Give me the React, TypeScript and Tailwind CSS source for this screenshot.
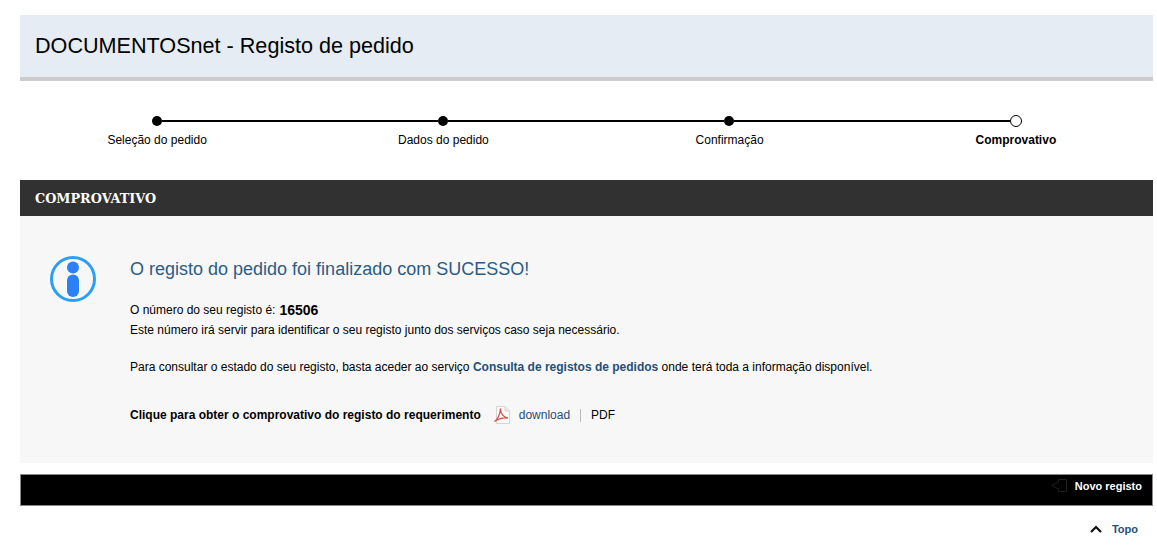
const STEPS = [
  { label: "Seleção do pedido", done: true },
  { label: "Dados do pedido", done: true },
  { label: "Confirmação", done: true },
  { label: "Comprovativo", done: false },
];

function InfoIcon() {
  return (
    <svg width="48" height="48" viewBox="0 0 48 48" className="shrink-0">
      <circle cx="24" cy="24" r="21.500" fill="none" stroke="#2a9ff4" strokeWidth="3" />
      <circle cx="24" cy="12.500" r="6" fill="#2a80f4" />
      <rect x="18" y="19.500" width="12" height="22.500" rx="6" fill="#2a80f4" />
    </svg>
  );
}

function PdfIcon() {
  return (
    <svg width="16" height="18" viewBox="0 0 16 18" className="shrink-0">
      <path d="M2.500 .5H11L15.500 5V17.500H2.500Z" fill="#fbfbfb" stroke="#d4d4d4" />
      <path d="M11 .5V5H15.500" fill="#e8e8e8" stroke="#d4d4d4" />
      <path
        d="M.5 15.500C3 14.500 6 9 6.500 2.500C6.500 7.500 9.500 11.500 14 12C10 11.500 4.500 12.500 .5 15.500Z"
        fill="none"
        stroke="#d8524c"
        strokeWidth="1.300"
      />
    </svg>
  );
}

function ExitIcon() {
  return (
    <svg width="16" height="13" viewBox="0 0 16 13" fill="none" stroke="#1e1e1e" className="shrink-0">
      <path d="M7.500 3V.5H15.500V12.500H7.500V10" />
      <path d="M7.500 3.500V3L.8 6.500L7.500 10V9.500" />
    </svg>
  );
}

function ChevronUp() {
  return (
    <svg width="12" height="8" viewBox="0 0 12 8" fill="none" stroke="#111" strokeWidth="2.200" className="shrink-0">
      <path d="M1 7L6 2L11 7" />
    </svg>
  );
}

export default function App() {
  return (
    <div className="w-[1157px] h-[548px] overflow-hidden bg-white pt-[15px] font-['Liberation_Sans',Arial,sans-serif] text-[12px] text-black">
      <div className="ml-[20px] w-[1133px] h-[66px] flex items-center pl-[15px] pb-[1px] bg-[#e6ecf4] border-b-[4px] border-[#cccccc]">
        <h1 className="text-[21.600px] font-normal leading-none">DOCUMENTOSnet - Registo de pedido</h1>
      </div>

      <div className="h-[99px] pt-[34px]">
        <div className="flex items-center ml-[152px] w-[870px] h-[11px]">
          {STEPS.map((s, i) => (
            <div key={s.label} className={i < 3 ? "flex flex-1 items-center" : "flex items-center"}>
              {s.done ? (
                <span className="w-[10px] h-[10px] rounded-full bg-black shrink-0" />
              ) : (
                <span className="w-[12px] h-[12px] rounded-full bg-white border border-black shrink-0" />
              )}
              {i < 3 && <span className="flex-1 h-[2px] bg-black" />}
            </div>
          ))}
        </div>
        <div className="grid grid-cols-4 ml-[14px] w-[1145px] mt-[7px]">
          {STEPS.map((s) => (
            <div key={s.label} className={s.done ? "text-center leading-[14px]" : "text-center leading-[14px] font-bold"}>
              {s.label}
            </div>
          ))}
        </div>
      </div>

      <div className="ml-[20px] w-[1133px]">
        <div className="h-[36px] flex items-center pl-[15px] pt-[1px] bg-[#313131] text-white font-['DejaVu_Serif',serif] font-bold text-[12.800px]">
          COMPROVATIVO
        </div>

        <div className="h-[247px] bg-[#f7f7f7] flex pl-[29px] pt-[39px]">
          <InfoIcon />
          <div className="ml-[33px] pt-[1px]">
            <div className="text-[18px] leading-[26px] text-[#2b5c85]">
              O registo do pedido foi finalizado com SUCESSO!
            </div>
            <div className="mt-[18px] leading-[20px] flex items-center h-[20px]">
              O número do seu registo é:
              <b className="ml-[4px] text-[14px]">16506</b>
            </div>
            <div className="leading-[20px]">
              Este número irá servir para identificar o seu registo junto dos serviços caso seja necessário.
            </div>
            <div className="mt-[17px] leading-[20px]">
              Para consultar o estado do seu registo, basta aceder ao serviço{" "}
              <a className="font-bold text-[#1f5077]">Consulta de registos de pedidos</a> onde terá toda a informação
              disponível.
            </div>
            <div className="mt-[28px] flex items-center h-[20px]">
              <b>Clique para obter o comprovativo do registo do requerimento</b>
              <span className="ml-[13px]">
                <PdfIcon />
              </span>
              <a className="ml-[9px] text-[#1f5077]">download</a>
              <span className="ml-[10px] mr-[10px] w-px h-[13px] bg-[#bbbbbb]" />
              <span>PDF</span>
            </div>
          </div>
        </div>

        <div className="mt-[11px] h-[32px] bg-black border border-[#888888] flex justify-end pt-[4px] pr-[10px] text-white font-bold text-[11px]">
          <ExitIcon />
          <span className="ml-[8px] leading-[15px]">Novo registo</span>
        </div>

        <div className="mt-[15px] flex items-center justify-end pr-[15px] text-[11px] font-bold text-[#1f5077]">
          <ChevronUp />
          <span className="ml-[10px]">Topo</span>
        </div>
      </div>
    </div>
  );
}
